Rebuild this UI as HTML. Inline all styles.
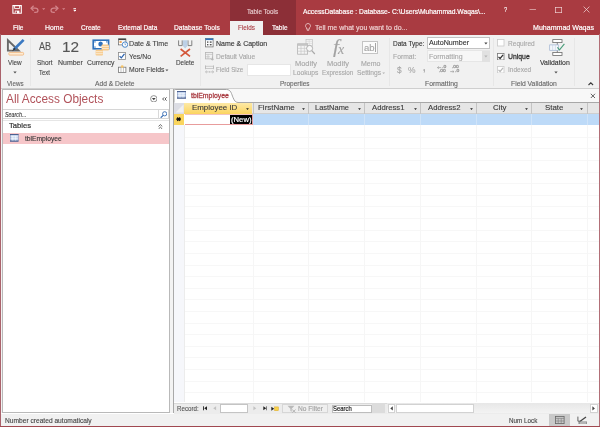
<!DOCTYPE html><html><head><meta charset="utf-8"><title>Access</title><style>
html,body{margin:0;padding:0}
body{width:600px;height:427px;position:relative;overflow:hidden;background:#fff;font-family:"Liberation Sans", sans-serif}
#app{will-change:transform;position:absolute;left:0;top:0;width:600px;height:427px;overflow:hidden}
.r{position:absolute;box-sizing:border-box}
.t{-webkit-text-stroke:.12px;position:absolute;white-space:nowrap;line-height:1;transform-origin:0 50%}
</style></head><body><div id="app">
<div class="r" style="left:0px;top:0px;width:600px;height:34.5px;background:#a93b41;"></div>
<div class="r" style="left:230px;top:0px;width:66px;height:34.5px;background:#8c2f37;"></div>
<div class="r" style="left:230px;top:21px;width:33px;height:14px;background:#f1f1f1;"></div>
<div class="r" style="left:0px;top:34.5px;width:600px;height:53.8px;background:#f1f1f1;"></div>
<div class="r" style="left:0px;top:88.3px;width:600px;height:0.9px;background:#cfcfcf;"></div>
<div class="r" style="left:0px;top:89.2px;width:600px;height:324px;background:#f3f3f3;"></div>
<div class="r" style="left:2.2px;top:89.2px;width:168px;height:324px;background:#fff;border:0.8px solid #b9b9b9;"></div>
<div class="r" style="left:172.8px;top:89.2px;width:426px;height:324.3px;background:#fff;border-left:0.9px solid #a9a9a9;"></div>
<div class="r" style="left:0px;top:413.5px;width:600px;height:12.3px;background:#f1f1f1;"></div>
<div class="r" style="left:0px;top:34px;width:1.1px;height:393px;background:#aa626b;"></div>
<div class="r" style="left:598.8px;top:34px;width:1.2px;height:393px;background:#b26f77;"></div>
<div class="r" style="left:0px;top:425.7px;width:600px;height:1.3px;background:#a04850;"></div>
<div class="r" style="left:3px;top:109px;width:165.6px;height:10.2px;background:#fff;border:0.8px solid #d6d6d6;border-left:none;"></div>
<div class="r" style="left:158.3px;top:109.5px;width:0.7px;height:9.2px;background:#d9d9d9;"></div>
<div class="r" style="left:3px;top:120px;width:166.4px;height:0.7px;background:#e6e6e6;"></div>
<div class="r" style="left:3px;top:132.5px;width:166.4px;height:11.8px;background:#f6c6c9;"></div>
<div class="r" style="left:173.7px;top:89.2px;width:424.9px;height:13.3px;background:#f8f8f8;"></div>
<svg class="r" style="left:173px;top:88px" width="70" height="15" viewBox="0 0 70 15"><path d="M1 14.6V2.6Q1 1.5 2.2 1.5H53.5C58 1.5 58.5 6 60 9.5S62.5 14.6 66 14.6Z" fill="#fff"/><path d="M1 14.6V2.6Q1 1.5 2.2 1.5H53.5C58 1.5 58.5 6 60 9.5S62.5 14.6 66 14.6H70" fill="none" stroke="#9b9b9b" stroke-width="0.9"/></svg>
<div class="r" style="left:239px;top:102.1px;width:359.6px;height:0.8px;background:#a8a8a8;"></div>
<div class="r" style="left:173.7px;top:102.8px;width:424.9px;height:10.9px;background:#e6e6e6;"></div>
<div class="r" style="left:173.7px;top:113.4px;width:424.9px;height:0.6px;background:#cfcfcf;"></div>
<div class="r" style="left:173.7px;top:102.8px;width:10.6px;height:10.9px;background:#dcdde4;"></div>
<svg class="r" style="left:174px;top:103px" width="10.5" height="10.5" viewBox="0 0 10.5 10.5"><path d="M9.5 1.5V9.5H1.5Z" fill="#f0f0f0"/></svg>
<div class="r" style="left:184.3px;top:102.6px;width:68px;height:11.1px;background:linear-gradient(#fde9a6,#fbd45f);"></div>
<div class="r" style="left:252.6px;top:103px;width:0.8px;height:10.6px;background:#c4c4c4;"></div>
<div class="r" style="left:307.6px;top:103px;width:0.8px;height:10.6px;background:#c4c4c4;"></div>
<div class="r" style="left:363.6px;top:103px;width:0.8px;height:10.6px;background:#c4c4c4;"></div>
<div class="r" style="left:419.6px;top:103px;width:0.8px;height:10.6px;background:#c4c4c4;"></div>
<div class="r" style="left:475.6px;top:103px;width:0.8px;height:10.6px;background:#c4c4c4;"></div>
<div class="r" style="left:531.2px;top:103px;width:0.8px;height:10.6px;background:#c4c4c4;"></div>
<div class="r" style="left:586.8000000000001px;top:103px;width:0.8px;height:10.6px;background:#c4c4c4;"></div>
<svg class="r" style="left:246.0px;top:107.6px" width="3" height="2" viewBox="0 0 3 2"><path d="M0.1 0.2H2.9L1.5 1.9Z" fill="#222"/></svg>
<svg class="r" style="left:302.0px;top:107.6px" width="3" height="2" viewBox="0 0 3 2"><path d="M0.1 0.2H2.9L1.5 1.9Z" fill="#222"/></svg>
<svg class="r" style="left:357.5px;top:107.6px" width="3" height="2" viewBox="0 0 3 2"><path d="M0.1 0.2H2.9L1.5 1.9Z" fill="#222"/></svg>
<svg class="r" style="left:413.5px;top:107.6px" width="3" height="2" viewBox="0 0 3 2"><path d="M0.1 0.2H2.9L1.5 1.9Z" fill="#222"/></svg>
<svg class="r" style="left:469.5px;top:107.6px" width="3" height="2" viewBox="0 0 3 2"><path d="M0.1 0.2H2.9L1.5 1.9Z" fill="#222"/></svg>
<svg class="r" style="left:525.0px;top:107.6px" width="3" height="2" viewBox="0 0 3 2"><path d="M0.1 0.2H2.9L1.5 1.9Z" fill="#222"/></svg>
<svg class="r" style="left:580.2px;top:107.6px" width="3" height="2" viewBox="0 0 3 2"><path d="M0.1 0.2H2.9L1.5 1.9Z" fill="#222"/></svg>
<div class="r" style="left:173.7px;top:125.2px;width:10.8px;height:277.3px;background:#f6f7fb;"></div>
<div class="r" style="left:184.3px;top:125.2px;width:0.6px;height:277.3px;background:#ececec;"></div>
<div class="r" style="left:184.5px;top:113.8px;width:414.1px;height:11.4px;background:#bddaf8;"></div>
<div class="r" style="left:173.7px;top:113.8px;width:10.8px;height:11px;background:#fad55e;"></div>
<div class="r" style="left:307.65px;top:113.8px;width:0.7px;height:11.4px;background:#cfe3f8;"></div>
<div class="r" style="left:363.65px;top:113.8px;width:0.7px;height:11.4px;background:#cfe3f8;"></div>
<div class="r" style="left:419.65px;top:113.8px;width:0.7px;height:11.4px;background:#cfe3f8;"></div>
<div class="r" style="left:475.65px;top:113.8px;width:0.7px;height:11.4px;background:#cfe3f8;"></div>
<div class="r" style="left:531.25px;top:113.8px;width:0.7px;height:11.4px;background:#cfe3f8;"></div>
<div class="r" style="left:586.85px;top:113.8px;width:0.7px;height:11.4px;background:#cfe3f8;"></div>
<div class="r" style="left:184.5px;top:113.6px;width:68.7px;height:11.8px;background:#fff;border:0.9px solid #e89c9c;border-left:none;border-top-color:#f3c4c0;"></div>
<div class="r" style="left:229.8px;top:114.8px;width:22.2px;height:9.6px;background:#000;"></div>
<svg class="r" style="left:176px;top:117.2px" width="5.4" height="4.4" viewBox="0 0 5.4 4.4"><path d="M0.2 2.2H5.2M1.3 0.5L4.1 3.9M4.1 0.5L1.3 3.9" stroke="#111" stroke-width="1.25" fill="none"/></svg>
<div class="r" style="left:184.8px;top:136.7px;width:413.8px;height:0.7px;background:#f7f7f7;"></div>
<div class="r" style="left:184.8px;top:148.32px;width:413.8px;height:0.7px;background:#f7f7f7;"></div>
<div class="r" style="left:184.8px;top:159.94px;width:413.8px;height:0.7px;background:#f7f7f7;"></div>
<div class="r" style="left:184.8px;top:171.56px;width:413.8px;height:0.7px;background:#f7f7f7;"></div>
<div class="r" style="left:184.8px;top:183.18px;width:413.8px;height:0.7px;background:#f7f7f7;"></div>
<div class="r" style="left:184.8px;top:194.8px;width:413.8px;height:0.7px;background:#f7f7f7;"></div>
<div class="r" style="left:184.8px;top:206.42px;width:413.8px;height:0.7px;background:#f7f7f7;"></div>
<div class="r" style="left:184.8px;top:218.04px;width:413.8px;height:0.7px;background:#f7f7f7;"></div>
<div class="r" style="left:184.8px;top:229.66px;width:413.8px;height:0.7px;background:#f7f7f7;"></div>
<div class="r" style="left:184.8px;top:241.28px;width:413.8px;height:0.7px;background:#f7f7f7;"></div>
<div class="r" style="left:184.8px;top:252.9px;width:413.8px;height:0.7px;background:#f7f7f7;"></div>
<div class="r" style="left:184.8px;top:264.52px;width:413.8px;height:0.7px;background:#f7f7f7;"></div>
<div class="r" style="left:184.8px;top:276.14px;width:413.8px;height:0.7px;background:#f7f7f7;"></div>
<div class="r" style="left:184.8px;top:287.76px;width:413.8px;height:0.7px;background:#f7f7f7;"></div>
<div class="r" style="left:184.8px;top:299.38px;width:413.8px;height:0.7px;background:#f7f7f7;"></div>
<div class="r" style="left:184.8px;top:311.0px;width:413.8px;height:0.7px;background:#f7f7f7;"></div>
<div class="r" style="left:184.8px;top:322.62px;width:413.8px;height:0.7px;background:#f7f7f7;"></div>
<div class="r" style="left:184.8px;top:334.24px;width:413.8px;height:0.7px;background:#f7f7f7;"></div>
<div class="r" style="left:184.8px;top:345.86px;width:413.8px;height:0.7px;background:#f7f7f7;"></div>
<div class="r" style="left:184.8px;top:357.48px;width:413.8px;height:0.7px;background:#f7f7f7;"></div>
<div class="r" style="left:184.8px;top:369.1px;width:413.8px;height:0.7px;background:#f7f7f7;"></div>
<div class="r" style="left:184.8px;top:380.72px;width:413.8px;height:0.7px;background:#f7f7f7;"></div>
<div class="r" style="left:184.8px;top:392.34px;width:413.8px;height:0.7px;background:#f7f7f7;"></div>
<div class="r" style="left:252.65px;top:125.2px;width:0.7px;height:277.3px;background:#f6f6f6;"></div>
<div class="r" style="left:307.65px;top:125.2px;width:0.7px;height:277.3px;background:#f6f6f6;"></div>
<div class="r" style="left:363.65px;top:125.2px;width:0.7px;height:277.3px;background:#f6f6f6;"></div>
<div class="r" style="left:419.65px;top:125.2px;width:0.7px;height:277.3px;background:#f6f6f6;"></div>
<div class="r" style="left:475.65px;top:125.2px;width:0.7px;height:277.3px;background:#f6f6f6;"></div>
<div class="r" style="left:531.25px;top:125.2px;width:0.7px;height:277.3px;background:#f6f6f6;"></div>
<div class="r" style="left:586.85px;top:125.2px;width:0.7px;height:277.3px;background:#f6f6f6;"></div>
<svg class="r" style="left:177px;top:91.4px" width="9" height="7.5" viewBox="0 0 9 7.5"><rect x="0.3" y="0.3" width="8.4" height="6.9" fill="#c6d6f0" stroke="#7489b8" stroke-width="0.6"/><path d="M0 0.45H9" stroke="#3f5585" stroke-width="0.9"/><path d="M0 7.05H9" stroke="#34487a" stroke-width="0.9"/><path d="M3.0 1.8V6.6M6.0 1.8V6.6M0.6 2.6999999999999997H8.4M0.6 4.65H8.4" stroke="#fff" stroke-width="0.55" fill="none"/></svg>
<svg class="r" style="left:10px;top:134.2px" width="8.5" height="7.5" viewBox="0 0 8.5 7.5"><rect x="0.3" y="0.3" width="7.9" height="6.9" fill="#c6d6f0" stroke="#7489b8" stroke-width="0.6"/><path d="M0 0.45H8.5" stroke="#3f5585" stroke-width="0.9"/><path d="M0 7.05H8.5" stroke="#34487a" stroke-width="0.9"/><path d="M2.8333333333333335 1.8V6.6M5.666666666666667 1.8V6.6M0.6 2.6999999999999997H7.9M0.6 4.65H7.9" stroke="#fff" stroke-width="0.55" fill="none"/></svg>
<svg class="r" style="left:589.5px;top:93px" width="6" height="6" viewBox="0 0 6 6"><path d="M0.8 0.8L5 5M5 0.8L0.8 5" stroke="#333" stroke-width="0.75" fill="none"/></svg>
<div class="r" style="left:173.7px;top:402.5px;width:424.9px;height:11px;background:#ececec;border-top:0.7px solid #dadada;"></div>
<div class="r" style="left:219.7px;top:404.2px;width:28.7px;height:8.4px;background:#fff;border:0.7px solid #c4c4c4;"></div>
<svg class="r" style="left:202.8px;top:406.1px" width="4.4" height="4.6" viewBox="0 0 4.4 4.6"><path d="M0.5 0.3V4.3" stroke="#222" stroke-width="0.9"/><path d="M4.1 0.3V4.3L1.2 2.3Z" fill="#222"/></svg>
<svg class="r" style="left:213px;top:406.1px" width="3.6" height="4.6" viewBox="0 0 3.6 4.6"><path d="M3.1 0.3V4.3L0.2 2.3Z" fill="#c2c2c2"/></svg>
<svg class="r" style="left:253.2px;top:406.1px" width="3.6" height="4.6" viewBox="0 0 3.6 4.6"><path d="M0.4 0.3V4.3L3.3 2.3Z" fill="#c2c2c2"/></svg>
<svg class="r" style="left:262.7px;top:406.1px" width="4.4" height="4.6" viewBox="0 0 4.4 4.6"><path d="M0.3 0.3V4.3L3.2 2.3Z" fill="#222"/><path d="M3.9 0.3V4.3" stroke="#222" stroke-width="0.9"/></svg>
<svg class="r" style="left:270.6px;top:405.6px" width="8" height="5.6" viewBox="0 0 8 5.6"><path d="M0.3 0.8V4.8L3.2 2.8Z" fill="#222"/><rect x="3.6" y="0.9" width="3.8" height="3.8" fill="#f8d24a" stroke="#dcaa28" stroke-width="0.5"/></svg>
<div class="r" style="left:281.7px;top:403.6px;width:46.5px;height:9.4px;background:#efefef;border:0.7px solid #d6d6d6;"></div>
<svg class="r" style="left:286.5px;top:404.5px" width="9.5" height="8" viewBox="0 0 9.5 8"><path d="M0.5 0.8H7.5L4.7 3.8V6.8L3.4 6V3.8Z" fill="#b9b9b9"/><path d="M5.2 4.6L8.6 7.6M8.6 4.6L5.2 7.6" stroke="#a9a9a9" stroke-width="0.8"/></svg>
<div class="r" style="left:331.5px;top:404.5px;width:40px;height:8.3px;background:#fff;border:0.7px solid #bdbdbd;"></div>
<div class="r" style="left:372px;top:403.2px;width:12.7px;height:10.3px;background:#dcdcdc;"></div>
<div class="r" style="left:387.3px;top:403.2px;width:210.6px;height:10.3px;background:linear-gradient(#e7e7e7,#f3f3f3);"></div>
<div class="r" style="left:387.6px;top:404.2px;width:7.8px;height:8.5px;background:#fff;border:0.6px solid #d2d2d2;"></div>
<div class="r" style="left:395.8px;top:404.2px;width:78.6px;height:8.5px;background:#fff;border:0.6px solid #d2d2d2;"></div>
<div class="r" style="left:589.8px;top:404.2px;width:7.8px;height:8.5px;background:#fff;border:0.6px solid #d2d2d2;"></div>
<svg class="r" style="left:389.8px;top:406.1px" width="3.2" height="4.8" viewBox="0 0 3.2 4.8"><path d="M2.8 0.2V4.6L0.3 2.4Z" fill="#444"/></svg>
<svg class="r" style="left:592.4px;top:406.1px" width="3.2" height="4.8" viewBox="0 0 3.2 4.8"><path d="M0.4 0.2V4.6L2.9 2.4Z" fill="#444"/></svg>
<div class="r" style="left:548.8px;top:414px;width:21.4px;height:11.7px;background:#c9c9c9;"></div>
<svg class="r" style="left:555px;top:416px" width="9.5" height="8" viewBox="0 0 9.5 8"><rect x="0.4" y="0.4" width="8.7" height="7.2" fill="none" stroke="#666" stroke-width="0.8"/><path d="M0.4 2.4H9.1M3.2 2.4V7.6M0.4 5H9.1M6.2 2.4V7.6" stroke="#777" stroke-width="0.6" fill="none"/></svg>
<svg class="r" style="left:576.5px;top:415.5px" width="10.5" height="8.5" viewBox="0 0 10.5 8.5"><path d="M0.9 0.6V5.2H3.4" stroke="#555" stroke-width="0.9" fill="none"/><path d="M3.2 5.2L9 0.9" stroke="#444" stroke-width="1.3"/><rect x="2" y="6" width="8" height="2" fill="#e9e9e9" stroke="#555" stroke-width="0.7"/></svg>
<svg class="r" style="left:12px;top:4.8px" width="10.5" height="9" viewBox="0 0 10.5 9"><path d="M0.9 0.6H9.3V8.3H0.9Z" fill="none" stroke="#fff" stroke-width="1.1"/><path d="M2.6 0.8V3.6H7.6V0.8" fill="none" stroke="#fff" stroke-width="0.9"/><rect x="2.8" y="5.6" width="4.6" height="2.6" fill="#fff"/><rect x="3.6" y="6.4" width="1.3" height="1.8" fill="#a93b41"/></svg>
<svg class="r" style="left:30px;top:5px" width="9" height="8" viewBox="0 0 9 8"><path d="M3.6 0.7L1 3.2L3.6 5.7" fill="none" stroke="#d3858b" stroke-width="1.2"/><path d="M1.2 3.2H5.2Q8 3.2 8 5.5Q8 7.4 5.4 7.4H4.2" fill="none" stroke="#d3858b" stroke-width="1.2"/></svg>
<svg class="r" style="left:42.2px;top:7.8px" width="3.2" height="2.2" viewBox="0 0 3.2 2.2"><path d="M0.1 0.3H3.1L1.6 2Z" fill="#d3858b"/></svg>
<svg class="r" style="left:50px;top:5px" width="9" height="8" viewBox="0 0 9 8"><path d="M5.4 0.7L8 3.2L5.4 5.7" fill="none" stroke="#d3858b" stroke-width="1.2"/><path d="M7.8 3.2H3.8Q1 3.2 1 5.5Q1 7.4 3.6 7.4H4.8" fill="none" stroke="#d3858b" stroke-width="1.2"/></svg>
<svg class="r" style="left:62.2px;top:7.8px" width="3.2" height="2.2" viewBox="0 0 3.2 2.2"><path d="M0.1 0.3H3.1L1.6 2Z" fill="#d3858b"/></svg>
<svg class="r" style="left:72.6px;top:7.8px" width="3.6" height="4.2" viewBox="0 0 3.6 4.2"><path d="M0.4 0.5H3.2" stroke="#fff" stroke-width="0.8"/><path d="M0.2 1.8H3.4L1.8 3.8Z" fill="#fff"/></svg>
<svg class="r" style="left:529px;top:9px" width="8" height="1.2" viewBox="0 0 8 1.2"><path d="M0.5 0.6H7" stroke="#f3dcdd" stroke-width="0.65"/></svg>
<svg class="r" style="left:555.3px;top:6.5px" width="7.2" height="6.2" viewBox="0 0 7.2 6.2"><rect x="0.5" y="0.5" width="6.2" height="5.2" fill="none" stroke="#f3dcdd" stroke-width="0.65"/></svg>
<svg class="r" style="left:582.6px;top:6.2px" width="7" height="7" viewBox="0 0 7 7"><path d="M0.6 0.6L6.4 6.4M6.4 0.6L0.6 6.4" stroke="#f3dcdd" stroke-width="0.7"/></svg>
<svg class="r" style="left:304.6px;top:23px" width="6" height="8.5" viewBox="0 0 6 8.5"><path d="M3 0.5A2.4 2.4 0 0 1 4.4 4.9V6.2H1.6V4.9A2.4 2.4 0 0 1 3 0.5Z" fill="none" stroke="#f6e3e3" stroke-width="0.7"/><path d="M1.9 7.3H4.1" stroke="#f6e3e3" stroke-width="0.7"/></svg>
<div class="r" style="left:29.6px;top:38px;width:0.7px;height:48px;background:#e7e7e7;"></div>
<div class="r" style="left:199.7px;top:38px;width:0.7px;height:48px;background:#e7e7e7;"></div>
<div class="r" style="left:389.2px;top:38px;width:0.7px;height:48px;background:#e7e7e7;"></div>
<div class="r" style="left:492.8px;top:38px;width:0.7px;height:48px;background:#e7e7e7;"></div>
<div class="r" style="left:574.3px;top:38px;width:0.7px;height:48px;background:#e7e7e7;"></div>
<svg class="r" style="left:5.5px;top:38px" width="19.5" height="18" viewBox="0 0 19.5 18"><path d="M1.9 2.2V12.6H12.6Z" fill="none" stroke="#696969" stroke-width="1.9" stroke-linejoin="miter"/><path d="M17.6 1.9L7.6 11.8" stroke="#3b79c2" stroke-width="2.7"/><path d="M8.4 9.6L6 13.2L9.9 11.3Z" fill="#3a3a3a"/><rect x="2.8" y="14.4" width="14.8" height="2.7" rx="0.9" fill="#fdebd3" stroke="#f1b376" stroke-width="0.8"/></svg>
<svg class="r" style="left:12.7px;top:71px" width="4" height="3" viewBox="0 0 4 3"><path d="M0.3 0.5H3.7L2 2.5Z" fill="#555"/></svg>
<svg class="r" style="left:91.5px;top:38.8px" width="18" height="17" viewBox="0 0 18 17"><rect x="1.2" y="1.2" width="15.4" height="8.6" fill="#fff" stroke="#2f72bc" stroke-width="1.6"/>
<ellipse cx="8.6" cy="5" rx="2.3" ry="2.5" fill="#2f72bc"/>
<rect x="2.3" y="2.3" width="1.3" height="1.2" fill="#2f72bc"/><rect x="14.2" y="2.3" width="1.3" height="1.2" fill="#2f72bc"/><rect x="2.3" y="7.5" width="1.3" height="1.2" fill="#2f72bc"/>
<rect x="9.6" y="5.4" width="7.4" height="6.2" rx="1" fill="#f6c98a"/>
<path d="M9.8 7.4H16.8M9.8 9.4H16.8" stroke="#fff" stroke-width="0.6"/>
<rect x="3.6" y="10.8" width="7.4" height="5.8" rx="1" fill="#f6c98a"/>
<path d="M3.8 12.7H10.8M3.8 14.7H10.8" stroke="#fff" stroke-width="0.6"/></svg>
<svg class="r" style="left:117.6px;top:38px" width="10.5" height="10" viewBox="0 0 10.5 10"><rect x="0.5" y="0.9" width="7.4" height="6" fill="#fff" stroke="#666" stroke-width="0.7"/>
<rect x="0.5" y="0.6" width="7.4" height="1.5" fill="#444"/>
<rect x="1.5" y="3" width="2.2" height="2" fill="#f0a860"/>
<circle cx="7" cy="6.6" r="2.7" fill="#fff" stroke="#3a7cc4" stroke-width="0.9"/>
<path d="M7 5.2V6.7H8.1" stroke="#3a7cc4" stroke-width="0.6" fill="none"/></svg>
<svg class="r" style="left:118.3px;top:52.1px" width="7.9" height="7.9" viewBox="0 0 7.9 7.9"><rect x="0.4" y="0.4" width="7.1000000000000005" height="7.1000000000000005" fill="#fff" stroke="#8a8a8a" stroke-width="0.8"/><path d="M1.58 4.1080000000000005L3.318 5.846L6.478 1.896" fill="none" stroke="#2b62ae" stroke-width="1.25"/></svg>
<svg class="r" style="left:118px;top:65px" width="8.6" height="8" viewBox="0 0 8.6 8"><rect x="0.5" y="2.2" width="7.4" height="5.2" fill="#fff" stroke="#777" stroke-width="0.8"/>
<path d="M3 2.2V7.4M5.4 2.2V7.4" stroke="#999" stroke-width="0.6"/>
<circle cx="4.2" cy="1.6" r="1.4" fill="#f4c46c"/></svg>
<svg class="r" style="left:165.4px;top:69px" width="4" height="3" viewBox="0 0 4 3"><path d="M0.4 0.5H3.4L1.9 2.3Z" fill="#555"/></svg>
<svg class="r" style="left:178px;top:39.5px" width="15" height="17" viewBox="0 0 15 17"><path d="M0.6 0.4V5.6H4.2V0.4" fill="none" stroke="#808080" stroke-width="1"/>
<path d="M10 0.4V5.6H13.8V0.4" fill="none" stroke="#808080" stroke-width="1"/>
<path d="M4.9 0.2H9.4V6L7.15 8.4L4.9 6Z" fill="#bdd0e6"/>
<path d="M2.6 9L12 16.4M12 9L2.6 16.4" stroke="#d4573b" stroke-width="1.6"/></svg>
<svg class="r" style="left:204.6px;top:38.2px" width="9" height="9.6" viewBox="0 0 9 9.6"><rect x="0.5" y="0.5" width="7.6" height="8.4" fill="#fff" stroke="#777" stroke-width="0.8"/>
<rect x="0.5" y="0.4" width="7.6" height="1.7" fill="#2f72bc"/>
<rect x="2" y="3.4" width="1.4" height="1.4" fill="#555"/><rect x="4.8" y="3.4" width="1.8" height="1.4" fill="#555"/>
<rect x="2" y="6" width="1.4" height="1.4" fill="#555"/><rect x="4.8" y="6" width="1.8" height="1.4" fill="#555"/></svg>
<svg class="r" style="left:204.6px;top:52px" width="9.4" height="9" viewBox="0 0 9.4 9"><rect x="0.5" y="0.5" width="7.2" height="6.4" fill="none" stroke="#b4b4b4" stroke-width="0.8"/>
<path d="M0.5 2.4H7.7M0.5 4.8H5M3 2.4V6.9" stroke="#b9b9b9" stroke-width="0.6"/>
<path d="M7.4 4.6V8M5.8 6.6L7.4 8.3L9 6.6" fill="none" stroke="#b0b0b0" stroke-width="0.8"/></svg>
<svg class="r" style="left:204.6px;top:65.2px" width="9.4" height="9" viewBox="0 0 9.4 9"><path d="M0.5 0.4V4.2M8.6 0.4V4.2" stroke="#b4b4b4" stroke-width="0.8"/>
<rect x="0.5" y="1.2" width="8.1" height="2.2" fill="none" stroke="#b9b9b9" stroke-width="0.7"/>
<path d="M0.6 6.9H3.6M5.6 6.9H8.6M1.8 5.7L0.5 6.9L1.8 8.1M7.3 5.7L8.7 6.9L7.3 8.1" fill="none" stroke="#b0b0b0" stroke-width="0.7"/>
<circle cx="4.6" cy="6.9" r="0.7" fill="#b0b0b0"/></svg>
<div class="r" style="left:246.7px;top:63.8px;width:43.9px;height:12.3px;background:#fff;border:0.7px solid #e6e6e6;"></div>
<svg class="r" style="left:297px;top:39.4px" width="18.5" height="16.5" viewBox="0 0 18.5 16.5"><rect x="9" y="0.5" width="6.4" height="6.6" fill="#f4f4f4" stroke="#c2c2c2" stroke-width="0.7"/>
<path d="M9 2.3H15.4M9 4.4H15.4M12.2 0.5V7" stroke="#cfcfcf" stroke-width="0.5"/>
<rect x="0.6" y="4.8" width="10" height="10.4" fill="#f4f4f4" stroke="#b4b4b4" stroke-width="0.8"/>
<rect x="0.6" y="4.8" width="10" height="2" fill="#c4c4c4"/>
<path d="M0.6 9.4H10.6M0.6 12.2H10.6M4 6.8V15.2M7.4 6.8V15.2" stroke="#c4c4c4" stroke-width="0.6"/>
<circle cx="12.6" cy="9.4" r="3" fill="#f8f8f8" stroke="#a9a9a9" stroke-width="0.9"/>
<path d="M14.8 11.6L17.8 15" stroke="#a9a9a9" stroke-width="1.2"/></svg>
<div class="r" style="left:362.2px;top:41.4px;width:16.3px;height:12.4px;background:#fbfbfb;border:0.7px solid #c4c4c4;"></div>
<div class="r" style="left:375.4px;top:43px;width:0.7px;height:9.2px;background:#a4a4a4;"></div>
<svg class="r" style="left:382.2px;top:71.5px" width="3.4" height="2.4" viewBox="0 0 3.4 2.4"><path d="M0.3 0.4H3.1L1.7 2Z" fill="#b0b0b0"/></svg>
<div class="r" style="left:427.4px;top:36.6px;width:62.8px;height:12.4px;background:#fff;border:0.8px solid #c2c2c2;"></div>
<svg class="r" style="left:484px;top:42.4px" width="4" height="3" viewBox="0 0 4 3"><path d="M0.3 0.4H3.5L1.9 2.4Z" fill="#444"/></svg>
<div class="r" style="left:427.4px;top:50.2px;width:62.8px;height:11.8px;background:#f7f7f7;border:0.7px solid #e6e6e6;"></div>
<div class="r" style="left:482.4px;top:50.6px;width:7.6px;height:11px;background:#e1e1e1;"></div>
<svg class="r" style="left:484px;top:55.2px" width="4" height="3" viewBox="0 0 4 3"><path d="M0.3 0.4H3.5L1.9 2.4Z" fill="#b4b4b4"/></svg>
<svg class="r" style="left:437.4px;top:65.6px" width="4.4" height="3.2" viewBox="0 0 4.4 3.2"><path d="M0.5 1.6H4.2M1.8 0.4L0.5 1.6L1.8 2.8" fill="none" stroke="#9a9a9a" stroke-width="0.7"/></svg>
<svg class="r" style="left:450px;top:69.6px" width="4.4" height="3.2" viewBox="0 0 4.4 3.2"><path d="M0.2 1.6H3.9M2.6 0.4L3.9 1.6L2.6 2.8" fill="none" stroke="#9a9a9a" stroke-width="0.7"/></svg>
<svg class="r" style="left:497.4px;top:39.4px" width="7.4" height="7.4" viewBox="0 0 7.4 7.4"><rect x="0.4" y="0.4" width="6.6000000000000005" height="6.6000000000000005" fill="#fff" stroke="#c9c9c9" stroke-width="0.8"/></svg>
<svg class="r" style="left:497.4px;top:52.7px" width="7.4" height="7.4" viewBox="0 0 7.4 7.4"><rect x="0.4" y="0.4" width="6.6000000000000005" height="6.6000000000000005" fill="#fff" stroke="#777" stroke-width="0.8"/><path d="M1.4800000000000002 3.8480000000000003L3.108 5.476L6.068 1.776" fill="none" stroke="#333" stroke-width="1.25"/></svg>
<svg class="r" style="left:497.4px;top:66px" width="7.4" height="7.4" viewBox="0 0 7.4 7.4"><rect x="0.4" y="0.4" width="6.6000000000000005" height="6.6000000000000005" fill="#fff" stroke="#c9c9c9" stroke-width="0.8"/><path d="M1.4800000000000002 3.8480000000000003L3.108 5.476L6.068 1.776" fill="none" stroke="#b9b9b9" stroke-width="1.25"/></svg>
<svg class="r" style="left:548.6px;top:38.8px" width="16.5" height="17" viewBox="0 0 16.5 17"><rect x="3.8" y="0.6" width="9.2" height="3" fill="#fff" stroke="#6b6b6b" stroke-width="0.8"/>
<rect x="3.8" y="13.4" width="9.2" height="3" fill="#fff" stroke="#6b6b6b" stroke-width="0.8"/>
<path d="M8.3 3.6V13.4" stroke="#6b6b6b" stroke-width="0.8"/>
<rect x="0.7" y="5.9" width="8.8" height="5.4" fill="#f4f7fb" stroke="#9db2d2" stroke-width="0.7"/>
<path d="M3.6 5.9V11.3M6.4 5.9V11.3" stroke="#b9c8de" stroke-width="0.5"/>
<path d="M8.4 8.4L10.5 10.9L15.4 4.8" fill="none" stroke="#4a9d7a" stroke-width="1.1"/></svg>
<svg class="r" style="left:553.8px;top:71px" width="4" height="3" viewBox="0 0 4 3"><path d="M0.3 0.5H3.7L2 2.5Z" fill="#555"/></svg>
<svg class="r" style="left:588.3px;top:82.2px" width="5.6" height="3.6" viewBox="0 0 5.6 3.6"><path d="M0.5 3L2.8 0.8L5.1 3" fill="none" stroke="#3c3c3c" stroke-width="1.1"/></svg>
<svg class="r" style="left:149.6px;top:94.7px" width="7.6" height="7.6" viewBox="0 0 7.6 7.6"><circle cx="3.8" cy="3.8" r="3.2" fill="#fff" stroke="#7a7a7a" stroke-width="0.8"/><path d="M1.9 2.9H5.7L3.8 5.3Z" fill="#444"/></svg>
<svg class="r" style="left:161.8px;top:96.6px" width="5.2" height="4" viewBox="0 0 5.2 4"><path d="M2.2 0.4L0.6 2L2.2 3.6M4.6 0.4L3 2L4.6 3.6" fill="none" stroke="#444" stroke-width="0.9"/></svg>
<svg class="r" style="left:159.6px;top:110.6px" width="7.4" height="7.4" viewBox="0 0 7.4 7.4"><circle cx="4.7" cy="2.8" r="2.1" fill="none" stroke="#3a6fb5" stroke-width="0.95"/><path d="M3.2 4.4L0.7 6.8" stroke="#3a6fb5" stroke-width="1.2"/></svg>
<svg class="r" style="left:158px;top:123.6px" width="4.8" height="5.6" viewBox="0 0 4.8 5.6"><path d="M0.5 2.4L2.4 0.6L4.3 2.4M0.5 5L2.4 3.2L4.3 5" fill="none" stroke="#444" stroke-width="0.8"/></svg>
<span class="t" style="left:332.60px;top:37.19px;font-size:19px;color:#a2a2a2;font-style:italic;font-family:'Liberation Serif', serif;transform:scaleX(1.1361);">f</span>
<span class="t" style="left:338.20px;top:42.64px;font-size:14px;color:#a2a2a2;font-style:italic;font-family:'Liberation Serif', serif;transform:scaleX(0.9970);">x</span>
<span class="t" style="left:363.80px;top:43.19px;font-size:9.4px;color:#a4a4a4;transform:scaleX(1.0156);">ab</span>
<span class="t" style="left:441.80px;top:65.04px;font-size:4.4px;color:#9a9a9a;-webkit-text-stroke:.3px;transform:scaleX(1.1438);">.0</span>
<span class="t" style="left:439.30px;top:69.04px;font-size:4.4px;color:#9a9a9a;-webkit-text-stroke:.3px;transform:scaleX(1.0967);">.00</span>
<span class="t" style="left:452.30px;top:65.04px;font-size:4.4px;color:#9a9a9a;-webkit-text-stroke:.3px;transform:scaleX(1.0967);">.00</span>
<span class="t" style="left:454.80px;top:69.04px;font-size:4.4px;color:#9a9a9a;-webkit-text-stroke:.3px;transform:scaleX(1.1438);">.0</span>
<span class="t" style="left:12.50px;top:23.73px;font-size:7.7px;color:#fff;-webkit-text-stroke:.2px;transform:scaleX(0.8474);">File</span>
<span class="t" style="left:45.00px;top:23.73px;font-size:7.7px;color:#fff;-webkit-text-stroke:.2px;transform:scaleX(0.9018);">Home</span>
<span class="t" style="left:80.75px;top:23.73px;font-size:7.7px;color:#fff;-webkit-text-stroke:.2px;transform:scaleX(0.8558);">Create</span>
<span class="t" style="left:117.50px;top:23.73px;font-size:7.7px;color:#fff;-webkit-text-stroke:.2px;transform:scaleX(0.8427);">External Data</span>
<span class="t" style="left:173.50px;top:23.73px;font-size:7.7px;color:#fff;-webkit-text-stroke:.2px;transform:scaleX(0.8655);">Database Tools</span>
<span class="t" style="left:237.50px;top:23.73px;font-size:7.7px;color:#a93b41;transform:scaleX(0.8286);">Fields</span>
<span class="t" style="left:272.00px;top:23.73px;font-size:7.7px;color:#fff;-webkit-text-stroke:.2px;transform:scaleX(0.8428);">Table</span>
<span class="t" style="left:247.00px;top:8.07px;font-size:7px;color:#e9cfd1;transform:scaleX(0.8881);">Table Tools</span>
<span class="t" style="left:302.50px;top:7.83px;font-size:7.5px;color:#fff;-webkit-text-stroke:.2px;transform:scaleX(0.8965);">AccessDatabase : Database- C:\Users\Muhammad.Waqas\...</span>
<span class="t" style="left:315.00px;top:23.73px;font-size:7.7px;color:#f2dada;transform:scaleX(0.9133);">Tell me what you want to do...</span>
<span class="t" style="left:504.00px;top:5.58px;font-size:8px;color:#fff;transform:scaleX(0.7186);">?</span>
<span class="t" style="left:533.25px;top:23.73px;font-size:7.7px;color:#fff;-webkit-text-stroke:.2px;transform:scaleX(0.9190);">Muhammad Waqas</span>
<span class="t" style="left:8.00px;top:59.23px;font-size:7.7px;color:#444;transform:scaleX(0.8287);">View</span>
<span class="t" style="left:6.70px;top:79.53px;font-size:7.7px;color:#666;transform:scaleX(0.8147);">Views</span>
<span class="t" style="left:38.70px;top:41.80px;font-size:10.2px;color:#555;transform:scaleX(0.8901);">AB</span>
<span class="t" style="left:37.00px;top:59.23px;font-size:7.7px;color:#444;transform:scaleX(0.8435);">Short</span>
<span class="t" style="left:39.20px;top:68.53px;font-size:7.7px;color:#444;transform:scaleX(0.7654);">Text</span>
<span class="t" style="left:61.60px;top:40.35px;font-size:14.6px;color:#555;transform:scaleX(1.0533);">12</span>
<span class="t" style="left:58.30px;top:59.23px;font-size:7.7px;color:#444;transform:scaleX(0.9033);">Number</span>
<span class="t" style="left:86.70px;top:59.23px;font-size:7.7px;color:#444;transform:scaleX(0.8818);">Currency</span>
<span class="t" style="left:128.70px;top:39.53px;font-size:7.7px;color:#444;transform:scaleX(0.9244);">Date &amp; Time</span>
<span class="t" style="left:128.70px;top:52.93px;font-size:7.7px;color:#444;transform:scaleX(0.9015);">Yes/No</span>
<span class="t" style="left:128.70px;top:66.23px;font-size:7.7px;color:#444;transform:scaleX(0.8837);">More Fields</span>
<span class="t" style="left:94.70px;top:79.53px;font-size:7.7px;color:#666;transform:scaleX(0.8717);">Add &amp; Delete</span>
<span class="t" style="left:175.80px;top:59.23px;font-size:7.7px;color:#444;transform:scaleX(0.8275);">Delete</span>
<span class="t" style="left:215.80px;top:39.73px;font-size:7.7px;color:#333;transform:scaleX(0.9077);">Name &amp; Caption</span>
<span class="t" style="left:215.80px;top:52.93px;font-size:7.7px;color:#a6a6a6;transform:scaleX(0.8598);">Default Value</span>
<span class="t" style="left:215.80px;top:66.23px;font-size:7.7px;color:#a6a6a6;transform:scaleX(0.8056);">Field Size</span>
<span class="t" style="left:295.00px;top:59.73px;font-size:7.7px;color:#a6a6a6;transform:scaleX(0.9710);">Modify</span>
<span class="t" style="left:293.00px;top:68.73px;font-size:7.7px;color:#a6a6a6;transform:scaleX(0.8701);">Lookups</span>
<span class="t" style="left:279.70px;top:79.53px;font-size:7.7px;color:#666;transform:scaleX(0.8417);">Properties</span>
<span class="t" style="left:326.70px;top:59.73px;font-size:7.7px;color:#a6a6a6;transform:scaleX(0.9710);">Modify</span>
<span class="t" style="left:321.70px;top:68.73px;font-size:7.7px;color:#a6a6a6;transform:scaleX(0.8230);">Expression</span>
<span class="t" style="left:361.30px;top:59.73px;font-size:7.7px;color:#a6a6a6;transform:scaleX(0.9129);">Memo</span>
<span class="t" style="left:356.70px;top:68.73px;font-size:7.7px;color:#a6a6a6;transform:scaleX(0.8675);">Settings</span>
<span class="t" style="left:392.50px;top:39.73px;font-size:7.7px;color:#333;transform:scaleX(0.8449);">Data Type:</span>
<span class="t" style="left:429.20px;top:39.43px;font-size:7.7px;color:#333;transform:scaleX(0.9269);">AutoNumber</span>
<span class="t" style="left:392.50px;top:53.23px;font-size:7.7px;color:#a6a6a6;transform:scaleX(0.8798);">Format:</span>
<span class="t" style="left:429.20px;top:52.73px;font-size:7.7px;color:#a6a6a6;transform:scaleX(0.9143);">Formatting</span>
<span class="t" style="left:396.70px;top:64.60px;font-size:9.6px;color:#a6a6a6;transform:scaleX(0.8608);">$</span>
<span class="t" style="left:408.00px;top:64.60px;font-size:9.6px;color:#a6a6a6;transform:scaleX(0.8791);">%</span>
<span class="t" style="left:422.50px;top:62.70px;font-size:10px;color:#a6a6a6;font-weight:700;transform:scaleX(0.8989);">,</span>
<span class="t" style="left:425.00px;top:79.73px;font-size:7.7px;color:#666;transform:scaleX(0.8925);">Formatting</span>
<span class="t" style="left:508.00px;top:39.73px;font-size:7.7px;color:#a6a6a6;transform:scaleX(0.8557);">Required</span>
<span class="t" style="left:508.00px;top:52.93px;font-size:7.7px;color:#333;-webkit-text-stroke:.3px;transform:scaleX(0.8903);">Unique</span>
<span class="t" style="left:508.00px;top:66.23px;font-size:7.7px;color:#a6a6a6;transform:scaleX(0.8480);">Indexed</span>
<span class="t" style="left:510.80px;top:79.73px;font-size:7.7px;color:#666;transform:scaleX(0.8827);">Field Validation</span>
<span class="t" style="left:540.40px;top:59.43px;font-size:7.7px;color:#333;transform:scaleX(0.8975);">Validation</span>
<span class="t" style="left:6.00px;top:93.42px;font-size:12px;color:#b1525a;-webkit-text-stroke:0;transform:scaleX(0.9858);">All Access Objects</span>
<span class="t" style="left:5.30px;top:111.27px;font-size:7px;color:#333;font-style:italic;transform:scaleX(0.7639);">Search...</span>
<span class="t" style="left:9.20px;top:122.03px;font-size:7.7px;color:#333;-webkit-text-stroke:.2px;transform:scaleX(0.9940);">Tables</span>
<span class="t" style="left:25.30px;top:134.77px;font-size:7.2px;color:#333;transform:scaleX(0.9276);">tblEmployee</span>
<span class="t" style="left:190.80px;top:92.08px;font-size:7.6px;color:#a93b41;-webkit-text-stroke:.3px;transform:scaleX(0.9068);">tblEmployee</span>
<span class="t" style="left:191.70px;top:104.38px;font-size:8px;color:#3a3a3a;transform:scaleX(0.9892);">Employee ID</span>
<span class="t" style="left:230.80px;top:115.88px;font-size:8px;color:#fff;-webkit-text-stroke:.2px;transform:scaleX(0.9605);">(New)</span>
<span class="t" style="left:257.50px;top:104.38px;font-size:8px;color:#3a3a3a;transform:scaleX(0.9962);">FirstName</span>
<span class="t" style="left:315.00px;top:104.38px;font-size:8px;color:#3a3a3a;transform:scaleX(0.9323);">LastName</span>
<span class="t" style="left:371.50px;top:104.38px;font-size:8px;color:#3a3a3a;transform:scaleX(0.9616);">Address1</span>
<span class="t" style="left:427.50px;top:104.38px;font-size:8px;color:#3a3a3a;transform:scaleX(0.9616);">Address2</span>
<span class="t" style="left:492.50px;top:104.38px;font-size:8px;color:#3a3a3a;transform:scaleX(0.9796);">City</span>
<span class="t" style="left:545.30px;top:104.38px;font-size:8px;color:#3a3a3a;transform:scaleX(0.9846);">State</span>
<span class="t" style="left:176.70px;top:404.62px;font-size:7.5px;color:#555;transform:scaleX(0.8224);">Record:</span>
<span class="t" style="left:297.50px;top:404.62px;font-size:7.5px;color:#a0a0a0;transform:scaleX(0.8820);">No Filter</span>
<span class="t" style="left:333.00px;top:404.82px;font-size:7.5px;color:#222;-webkit-text-stroke:.2px;transform:scaleX(0.7869);">Search</span>
<span class="t" style="left:5.00px;top:416.72px;font-size:7.3px;color:#444;transform:scaleX(0.9096);">Number created automaticaly</span>
<span class="t" style="left:508.70px;top:416.72px;font-size:7.3px;color:#444;transform:scaleX(0.8612);">Num Lock</span>
</div></body></html>
